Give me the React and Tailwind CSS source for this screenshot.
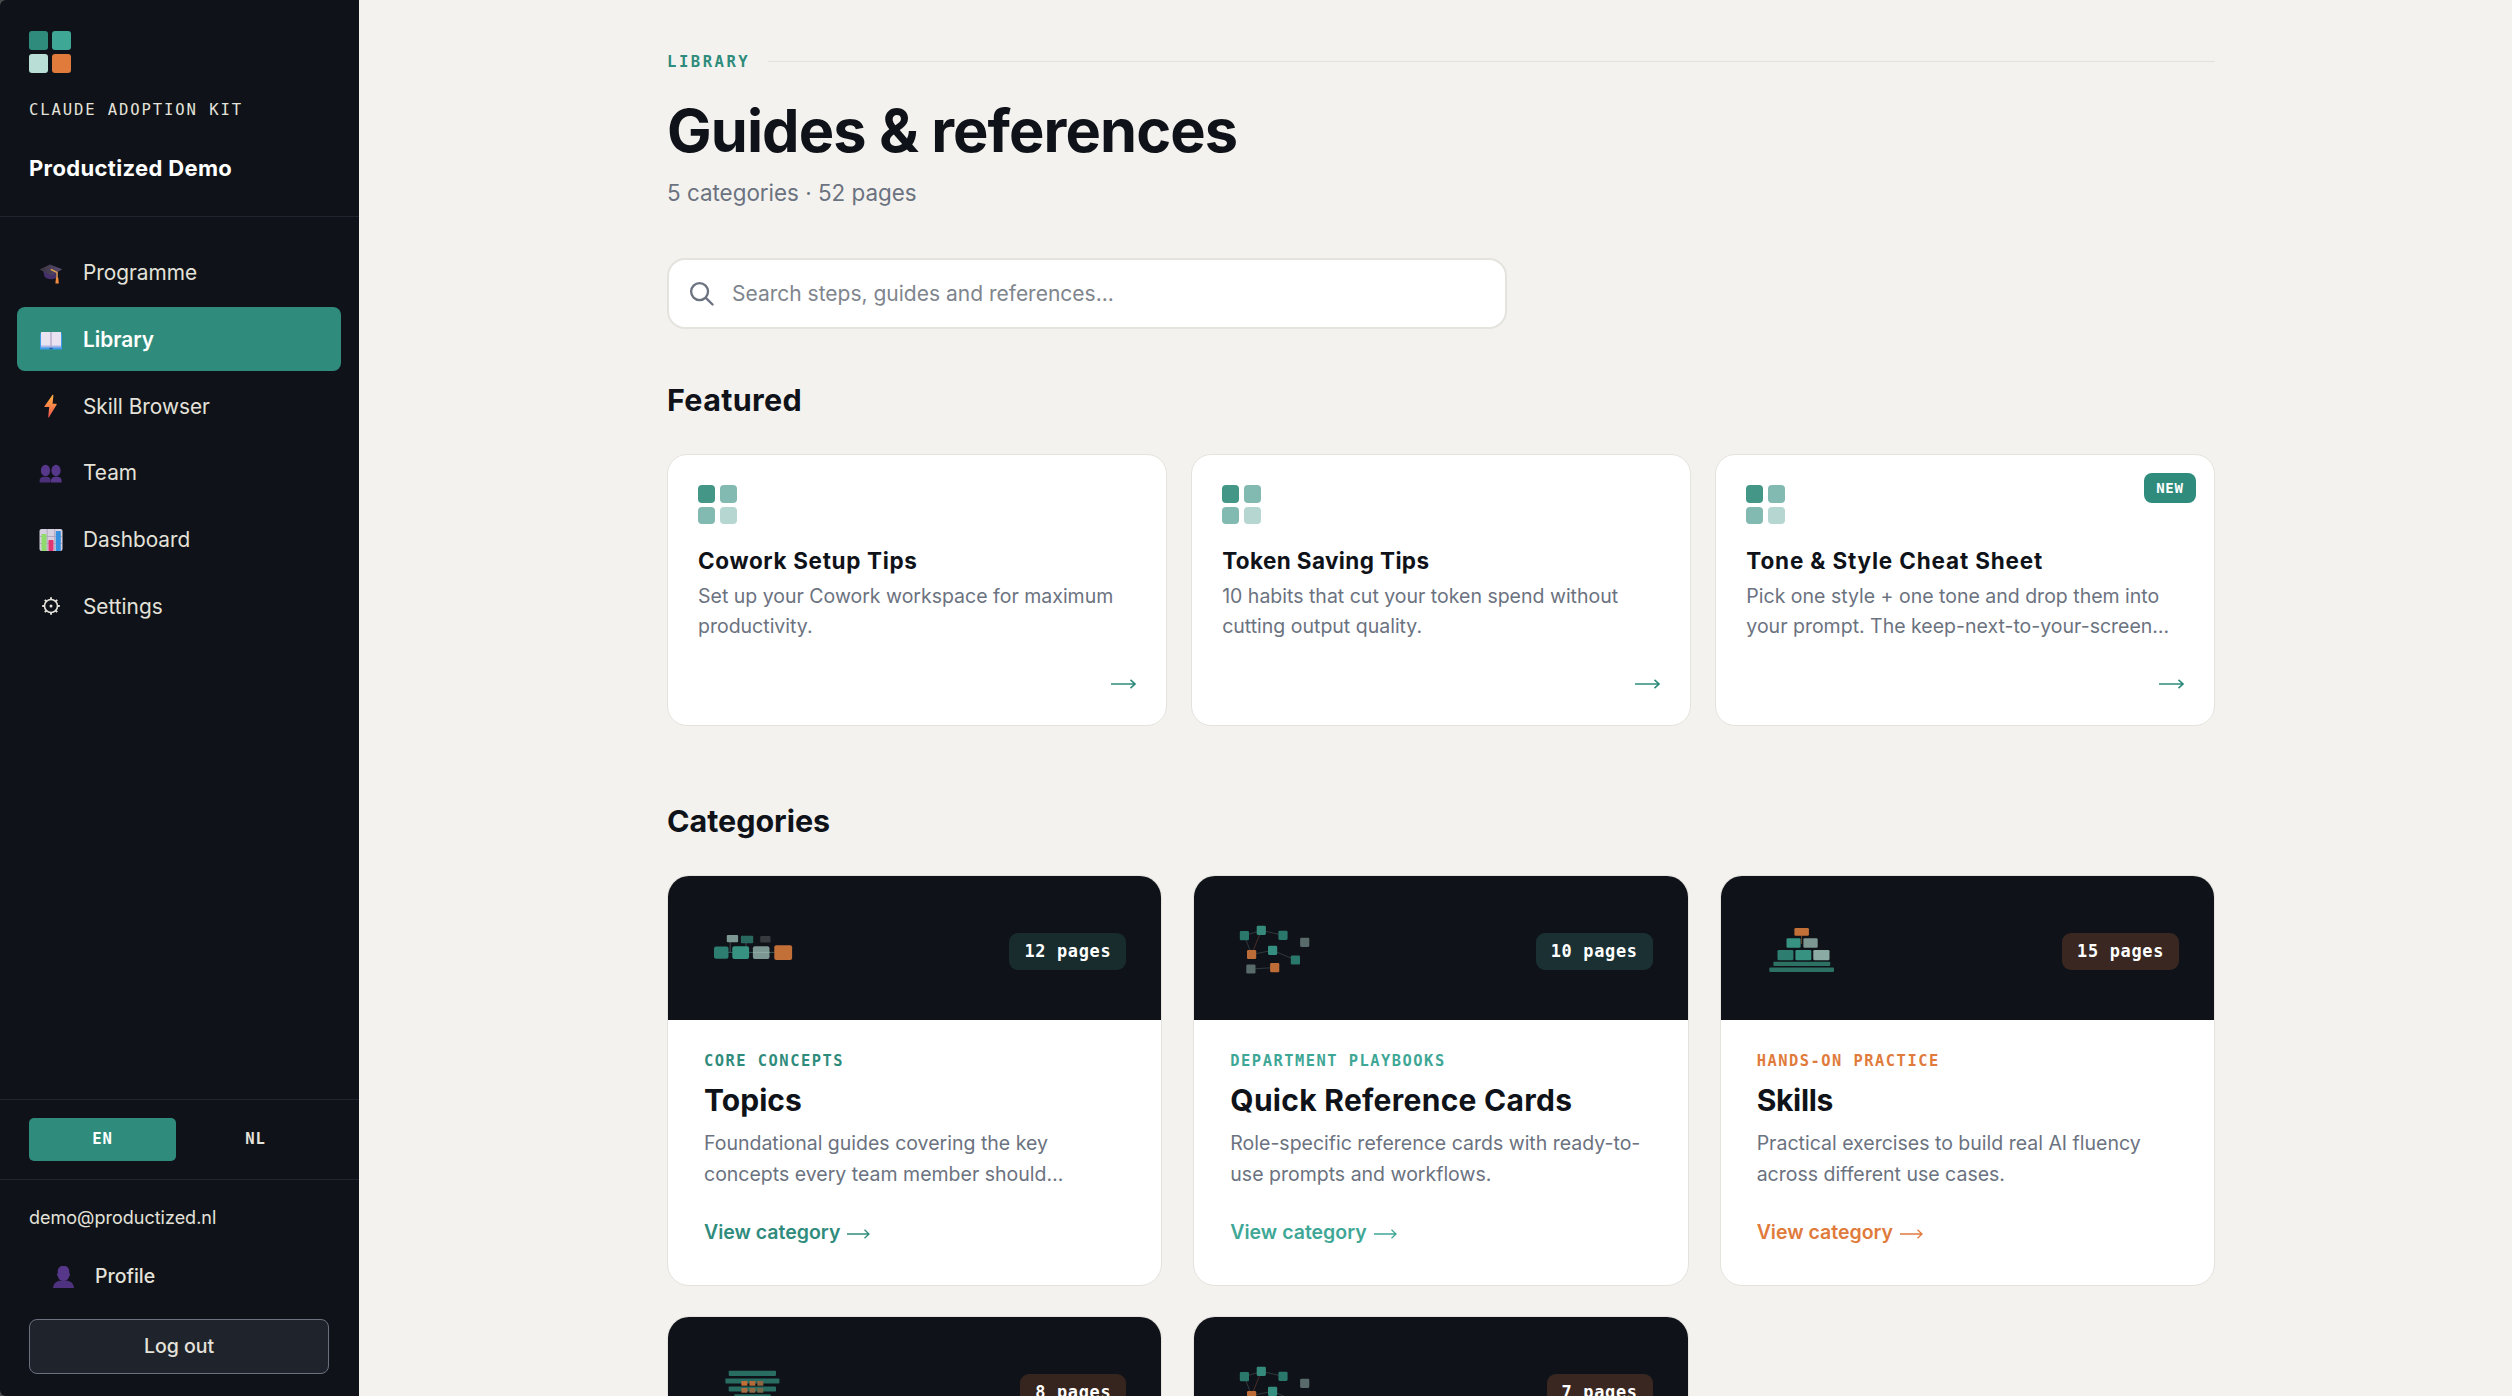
import React from 'react';

const NAV = [
  { label: 'Programme', icon: GradCap },
  { label: 'Library', icon: Book, active: true },
  { label: 'Skill Browser', icon: Bolt },
  { label: 'Team', icon: People },
  { label: 'Dashboard', icon: Chart },
  { label: 'Settings', icon: Gear },
];

const FEATURED = [
  { title: 'Cowork Setup Tips', tracking: 'tracking-[0.650px]', lines: ['Set up your Cowork workspace for maximum', 'productivity.'] },
  { title: 'Token Saving Tips', tracking: 'tracking-[0.380px]', lines: ['10 habits that cut your token spend without', 'cutting output quality.'] },
  { title: 'Tone & Style Cheat Sheet', tracking: 'tracking-[0.830px]', lines: ['Pick one style + one tone and drop them into', 'your prompt. The keep-next-to-your-screen…'], isNew: true },
];

const CATEGORIES = [
  {
    title: 'Topics', eyebrow: 'CORE CONCEPTS', pages: '12 pages', art: TopicsArt,
    color: 'text-[#2f8c7c]', badge: 'bg-[#182b2d]', tracking: 'tracking-[0.060px]',
    lines: ['Foundational guides covering the key', 'concepts every team member should…'],
  },
  {
    title: 'Quick Reference Cards', eyebrow: 'DEPARTMENT PLAYBOOKS', pages: '10 pages', art: NetworkArt,
    color: 'text-[#3fa796]', badge: 'bg-[#1a3033]', tracking: 'tracking-[0.280px]',
    lines: ['Role-specific reference cards with ready-to-', 'use prompts and workflows.'],
  },
  {
    title: 'Skills', eyebrow: 'HANDS-ON PRACTICE', pages: '15 pages', art: PyramidArt,
    color: 'text-[#e07b3c]', badge: 'bg-[#3a2722]', tracking: 'tracking-[-0.300px]',
    lines: ['Practical exercises to build real AI fluency', 'across different use cases.'],
  },
  { pages: '8 pages', art: StackArt, badge: 'bg-[#36251e]' },
  { pages: '7 pages', art: NetworkArt, badge: 'bg-[#3a2722]' },
];

function GradCap() {
  return (
    <svg width="24" height="24" viewBox="0 0 24 24">
      <defs>
        <linearGradient id="cap" x1="0" y1="0" x2="1" y2="0">
          <stop offset="0" stopColor="#3b3540" />
          <stop offset="1" stopColor="#594a72" />
        </linearGradient>
      </defs>
      <path d="M4 9h15v6.500c-3 3.600-11 3.600-13.500 0z" fill="#46306b" />
      <path d="M.5 8.500 11 3.500l12.200 4.800L12.500 14.500z" fill="url(#cap)" />
      <path d="M11.800 8.400l6.200 3v6" fill="none" stroke="#e9a94b" strokeWidth="1.300" />
      <path d="M17 16.500h2.200l.6 6h-3.400z" fill="#f28a3f" />
    </svg>
  );
}

function Book() {
  return (
    <svg width="24" height="24" viewBox="0 0 24 24">
      <path d="M1 5.500h22v16H1z" fill="#3f9bea" />
      <path d="M2 4h20v15H2z" fill="#e9e3f1" />
      <path d="M2 17.500h20v2H2z" fill="#a9b6e6" />
      <path d="M12 4v15.500" stroke="#b8aacb" strokeWidth="1.400" />
      <path d="M10.500 20.500h3" stroke="#20599e" strokeWidth="1.500" />
    </svg>
  );
}

function Bolt() {
  return (
    <svg width="24" height="24" viewBox="0 0 24 24">
      <defs>
        <linearGradient id="bolt" x1="0" y1="0" x2="0" y2="1">
          <stop offset="0" stopColor="#ffb441" />
          <stop offset="1" stopColor="#ee5350" />
        </linearGradient>
      </defs>
      <path d="M13.600.8 5.500 12.200c-.3.500 0 .9.500.9h4.200l-1 10c0 .5.500.6.800.2l7.600-12.600c.3-.5 0-.9-.5-.9h-3.500l.8-8.600c0-.5-.5-.7-.8-.4z" fill="url(#bolt)" />
    </svg>
  );
}

function People() {
  return (
    <svg width="24" height="24" viewBox="0 0 24 24" fill="#57378a">
      <ellipse cx="6.500" cy="9.500" rx="4.600" ry="5.800" />
      <ellipse cx="17" cy="9.500" rx="4.600" ry="5.800" />
      <path d="M.6 21.500v-2c0-2.500 2-3.700 4.400-3.700h2.600c2.400 0 4 1.200 4 3.700v2z" fill="#4c2f79" />
      <path d="M12 21.500v-2c0-2.500 2-3.700 4.400-3.700H18c2.800 0 4.600 1.200 4.600 3.700v2z" />
    </svg>
  );
}

function Chart() {
  return (
    <svg width="24" height="24" viewBox="0 0 24 24">
      <rect x=".5" y="1" width="23" height="22" rx="2" fill="#d6cfdf" />
      <path d="M1 8.500h22M1 15.500h22M8.200 1v22M15.700 1v22" stroke="#b3a8c0" />
      <rect x="2.500" y="6" width="5" height="17" rx=".8" fill="#8fdc6c" />
      <rect x="9.500" y="12" width="5" height="11" rx=".8" fill="#e23672" />
      <rect x="16.800" y="3" width="5" height="20" rx=".8" fill="#3590e0" />
    </svg>
  );
}

function Gear() {
  return (
    <svg width="24" height="24" viewBox="0 0 24 24" fill="none" stroke="#e4e2da">
      <circle cx="12" cy="12" r="6.500" strokeWidth="1.600" />
      <circle cx="12" cy="12" r="1.500" fill="#e4e2da" stroke="none" />
      <path d="M12 3.200v2.300M12 18.500v2.300M3.200 12h2.300M18.500 12h2.300M5.800 5.800l1.600 1.600M16.600 16.600l1.600 1.600M5.800 18.200l1.600-1.600M16.600 7.400l1.600-1.600" strokeWidth="1.900" />
    </svg>
  );
}

function Person() {
  return (
    <svg width="24" height="24" viewBox="0 0 24 24">
      <path d="M6.700 7.500C6.700 3 8.500 1 12.500 1s5.800 2 5.800 6.500v.7c.9.200.9 2.500 0 2.700-.5 3-3 5-5.800 5s-5.300-2-5.800-5c-.9-.2-.9-2.500 0-2.700z" fill="#57378a" />
      <path d="M2 23c.4-5 4-7.300 7.500-7.300h6c3.700 0 7 2.300 7.500 7.300z" fill="#4f327f" />
    </svg>
  );
}

function Arrow({ className, w, bold }) {
  return (
    <svg className={className} width={w} height="12" viewBox={`0 0 ${w} 12`} fill="none" stroke="currentColor" strokeWidth={bold ? 1.6 : 1.3}>
      <path d={`M0 6h${w - 1}M${w - 5.5} 1.800 ${w - 1} 6l-4.500 4.200`} />
    </svg>
  );
}

function TopicsArt() {
  return (
    <svg width="120" height="80" viewBox="0 0 120 80">
      <path d="M24 40.400h48" stroke="#355b59" />
      <path d="M26.200 30v10M42 30v5" stroke="#43494e" />
      <rect x="22.800" y="23" width="11.300" height="7.300" rx="1" fill="#7d9793" />
      <rect x="36.900" y="23.800" width="12.300" height="7.400" rx="1" fill="#2a685f" />
      <rect x="56.200" y="24" width="10.300" height="6.500" rx="1" fill="#373a3f" />
      <rect x="10" y="34.600" width="14.500" height="12.200" rx="2" fill="#2d7d70" />
      <rect x="28.300" y="34.300" width="16.800" height="12.600" rx="2" fill="#379282" />
      <rect x="48.900" y="34.300" width="16.600" height="12.600" rx="2" fill="#7d9793" />
      <path d="M49 40.400h16.500" stroke="#94aaa6" />
      <rect x="70.300" y="33.300" width="17.800" height="14.700" rx="2" fill="#c27038" />
    </svg>
  );
}

function NetworkArt() {
  const nodes = [
    [14.4, 23.7, '#2a776b'], [31.3, 18.3, '#358a7b'], [53, 23.3, '#2a776b'],
    [74.7, 30.3, '#586a69'], [21.6, 42.5, '#bd6b37'], [42.6, 38.3, '#358f80'],
    [65.4, 48, '#2a776b'], [20.9, 57, '#586a69'], [44.7, 55.6, '#bd6b37'],
  ];
  return (
    <svg width="120" height="80" viewBox="0 0 120 80">
      <path d="M14.400 23.700 31.300 18.300 53 23.300M14.400 23.700l7.200 18.800 21-4.200 22.800 9.700M21 57l23.700-1.400" fill="none" stroke="#30393d" />
      <path d="M31.300 18.300 21.600 42.500" stroke="#482d28" />
      {nodes.map(([x, y, fill]) => (
        <rect key={`${x}-${y}`} x={x - 4.6} y={y - 4.6} width="9.200" height="9.200" rx="1.300" fill={fill} />
      ))}
    </svg>
  );
}

function PyramidArt() {
  return (
    <svg width="120" height="80" viewBox="0 0 120 80">
      <path d="M45.600 23v9" stroke="#6b4431" />
      <rect x="38.400" y="16" width="14.500" height="7.800" rx="1.300" fill="#c27038" />
      <rect x="30.500" y="26.300" width="14.100" height="9.500" rx="1.300" fill="#379282" />
      <rect x="47.400" y="26.300" width="14.300" height="9.500" rx="1.300" fill="#7d9793" />
      <rect x="21.500" y="38" width="15.900" height="10.300" rx="1.300" fill="#2d7d70" />
      <rect x="39.400" y="38" width="15.900" height="10.300" rx="1.300" fill="#379282" />
      <rect x="57.300" y="38" width="16.200" height="10.300" rx="1.300" fill="#8caaa4" />
      <rect x="17.400" y="49.700" width="56.800" height="4.300" rx=".8" fill="#2d7064" />
      <rect x="13.300" y="55.600" width="64.700" height="4.300" rx=".8" fill="#2d7064" />
    </svg>
  );
}

function StackArt() {
  return (
    <svg width="120" height="80" viewBox="0 0 120 80">
      <g fill="#286c62">
        <rect x="24.700" y="17.700" width="47.300" height="5.200" rx=".8" />
        <rect x="21.400" y="25.400" width="54" height="5.200" rx=".8" />
        <rect x="24.700" y="33.400" width="47.300" height="5.200" rx=".8" />
        <rect x="30.200" y="41.300" width="36.500" height="5.200" rx=".8" />
      </g>
      <rect x="37.400" y="28" width="6" height="4.700" fill="#c27038" />
      <rect x="45.400" y="28" width="6" height="4.700" fill="#b46b3a" />
      <rect x="53.300" y="28" width="6" height="4.700" fill="#8f6641" />
      <rect x="37.400" y="35" width="6" height="4.700" fill="#a96d42" />
      <rect x="45.400" y="35" width="6" height="4.700" fill="#8f6b45" />
      <rect x="53.300" y="35" width="6" height="4.700" fill="#746948" />
    </svg>
  );
}

function Sidebar() {
  return (
    <div className="h-full w-[359px] shrink-0 bg-[#4b4b4d]">
      <aside className="flex h-full flex-col rounded-l-[6px] bg-[#0f1319] text-[#e4e2da]">
        <div className="h-[217px] border-b border-[#1f242e] pl-[29px] pt-[31px]">
          <div className="grid w-[42px] grid-cols-2 gap-1">
            <div className="h-[19px] rounded-[3px] bg-[#2f8c7c]" />
            <div className="h-[19px] rounded-[3px] bg-[#3fa796]" />
            <div className="h-[19px] rounded-[3px] bg-[#b9ded6]" />
            <div className="h-[19px] rounded-[3px] bg-[#e07b3c]" />
          </div>
          <p className="mt-[27px] whitespace-nowrap font-['DejaVu_Sans_Mono',monospace] text-[15.6px] leading-5 tracking-[1.870px]">CLAUDE ADOPTION KIT</p>
          <p className="mt-[33px] whitespace-nowrap text-[22px] font-bold leading-[30px] tracking-[0.350px] text-white">Productized Demo</p>
        </div>

        <nav className="flex flex-col gap-[2.700px] pl-[17px] pr-[18px] pt-[23px]">
          {NAV.map(({ label, icon: Icon, active }) => (
            <a key={label} className={`flex h-16 items-center gap-5 rounded-lg pl-[22px] text-[20.8px] ${active ? 'bg-[#2f8c7c] font-semibold text-white' : ''}`}>
              <span className="mt-[2px]"><Icon /></span>
              <span className="pt-[2px]">{label}</span>
            </a>
          ))}
        </nav>

        <div className="mt-auto flex h-20 items-center gap-[6px] border-t border-[#1f242e] pl-[29px] pr-[30px] font-['DejaVu_Sans_Mono',monospace] text-[15.6px] font-bold tracking-[0.8px]">
          <button className="h-[43px] flex-1 rounded-[5px] bg-[#2f8c7c] pt-[1px] text-white">EN</button>
          <button className="h-[43px] flex-1 pt-[1px]">NL</button>
        </div>
        <div className="h-[217px] border-t border-[#1f242e] pl-[29px] pr-[30px] pt-[26px]">
          <p className="text-[18px] leading-6">demo@productized.nl</p>
          <div className="mt-[25px] flex h-[44px] items-center gap-5 pl-[22px] text-[19.5px] font-medium">
            <Person />
            <span>Profile</span>
          </div>
          <button className="mt-[20px] h-[55px] w-full rounded-lg border border-[#6b7080] bg-[#1f232b] text-[19.5px] font-medium">Log out</button>
        </div>
      </aside>
    </div>
  );
}

function FeaturedCard({ title, tracking, lines, isNew }) {
  return (
    <div className="relative h-[272px] rounded-[20px] border border-[#e5e3dd] bg-white pl-[30px] pt-[30px]">
      {isNew && (
        <span className="absolute right-[18px] top-[18px] flex h-[30px] w-[52px] items-center justify-center rounded-lg bg-[#2f8c7c] font-['DejaVu_Sans_Mono',monospace] text-[14px] font-bold tracking-[0.8px] text-white">NEW</span>
      )}
      <div className="grid w-[39px] grid-cols-2 gap-x-[5px] gap-y-1">
        <div className="h-[18px] rounded-[4px] bg-[#449687]" />
        <div className="h-[18px] rounded-[4px] bg-[#82b9b0]" />
        <div className="h-[17px] rounded-[4px] bg-[#82b9b0]" />
        <div className="h-[17px] rounded-[4px] bg-[#b6d6d1]" />
      </div>
      <h3 className={`mt-[21px] whitespace-nowrap text-[22.5px] font-bold leading-[32px] text-[#0f1319] ${tracking}`}>{title}</h3>
      <div className="mt-[4px] h-[60px] whitespace-nowrap text-[19.5px] leading-[30px] text-[#6b7280]">
        {lines.map(l => <p key={l}>{l}</p>)}
      </div>
      <div className="mt-[37px] flex justify-end pr-[30px] text-[#2f8c7c]">
        <Arrow w={25} bold />
      </div>
    </div>
  );
}

function CategoryCard({ title, tracking, eyebrow, pages, art: Art, color, badge, lines }) {
  return (
    <div className="h-[411px] overflow-hidden rounded-[22px] border border-[#e5e3dd] bg-white">
      <div className="flex h-[144px] items-center justify-between bg-[#0f1319] pl-[35.5px] pr-[35px] pt-[7px]">
        <Art />
        <span className={`flex h-[37px] items-center rounded-[9px] px-[15px] font-['DejaVu_Sans_Mono',monospace] text-[16.9px] font-bold tracking-[0.7px] text-white ${badge}`}>{pages}</span>
      </div>
      {title && (
        <div className="pl-[36px] pt-[31px]">
          <p className={`whitespace-nowrap font-['DejaVu_Sans_Mono',monospace] text-[15.4px] font-bold leading-5 tracking-[1.5px] ${color}`}>{eyebrow}</p>
          <h3 className={`mt-[8px] whitespace-nowrap text-[30px] font-bold leading-[42px] text-[#0f1319] ${tracking}`}>{title}</h3>
          <div className="mt-[7px] h-[62px] whitespace-nowrap text-[19.5px] leading-[31px] text-[#6b7280]">
            {lines.map(l => <p key={l}>{l}</p>)}
          </div>
          <div className={`mt-[30px] flex items-center gap-[7px] text-[19.5px] font-semibold leading-6 ${color}`}>
            <span>View category</span>
            <Arrow w={23} className="mt-1" />
          </div>
        </div>
      )}
    </div>
  );
}

export default function App() {
  return (
    <div className="flex h-[1396px] w-[2512px] overflow-hidden bg-[#f4f2ee] font-['Inter',sans-serif]">
      <Sidebar />
      <main className="flex-1 pl-[308px] pt-[49px]">
        <div className="w-[1548px]">
          <div className="flex h-6 items-center gap-[18px]">
            <span className="pt-[2px] font-['DejaVu_Sans_Mono',monospace] text-[15.6px] font-bold leading-6 tracking-[2.5px] text-[#2f8c7c]">LIBRARY</span>
            <div className="h-px flex-1 bg-[#e3e1dc]" />
          </div>
          <h1 className="mt-[22px] whitespace-nowrap text-[59.5px] font-bold leading-[70px] tracking-[-0.9px] text-[#0f1319]">Guides &amp; references</h1>
          <p className="mt-[12px] text-[22.4px] leading-8 text-[#6b7280]">5 categories · 52 pages</p>

          <div className="mt-[49px] flex h-[71px] w-[840px] items-center gap-[18px] rounded-[18px] border-2 border-[#e5e3dd] bg-white pl-5">
            <svg width="25" height="25" viewBox="0 0 26 26" fill="none" stroke="#6b7280" strokeWidth="2.400" strokeLinecap="round">
              <circle cx="11" cy="11" r="8.800" />
              <path d="m17.500 17.500 7 7" />
            </svg>
            <span className="pt-[1px] text-[21px] text-[#7f858d]">Search steps, guides and references...</span>
          </div>

          <h2 className="mt-[51px] text-[30.5px] font-bold leading-10 tracking-[0.34px] text-[#0f1319]">Featured</h2>
          <div className="mt-[34px] grid grid-cols-3 gap-[24.5px]">
            {FEATURED.map(f => <FeaturedCard key={f.title} {...f} />)}
          </div>

          <h2 className="mt-[75px] text-[30.5px] font-bold leading-10 tracking-[-0.04px] text-[#0f1319]">Categories</h2>
          <div className="mt-[34px] grid grid-cols-3 gap-x-[31px] gap-y-[30px]">
            {CATEGORIES.map(c => <CategoryCard key={c.pages} {...c} />)}
          </div>
        </div>
      </main>
    </div>
  );
}
